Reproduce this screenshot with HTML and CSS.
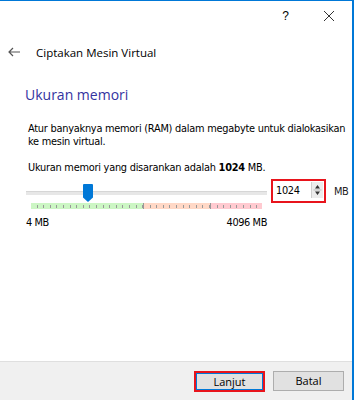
FILE: index.html
```html
<!DOCTYPE html>
<html>
<head>
<meta charset="utf-8">
<link rel="stylesheet" href="styles.css">
</head>
<body>
<div class="window">
  <div class="titlebar">
    <span class="help">?</span>
    <svg class="close" width="12" height="12" viewBox="0 0 12 12"><path d="M1 1 L11 11 M11 1 L1 11" stroke="#333" stroke-width="1" fill="none"/></svg>
  </div>
  <div class="header">
    <svg class="back" width="12" height="10" viewBox="0 0 12 10"><path d="M1 5 H12 M5 1 L1 5 L5 9" stroke="#555" stroke-width="1.2" fill="none"/></svg>
    <span class="title">Ciptakan Mesin Virtual</span>
  </div>
  <div class="main">
    <h1 class="heading">Ukuran memori</h1>
    <p class="desc">Atur banyaknya memori (RAM) dalam megabyte untuk dialokasikan ke mesin virtual.</p>
    <p class="rec">Ukuran memori yang disarankan adalah <b>1024</b> MB.</p>
    <div class="memrow">
      <div class="slider">
        <div class="track"><div class="thumb"></div></div>
        <div class="ticks">
          <div class="zone green"></div><div class="zone orange"></div><div class="zone red"></div>
        </div>
        <div class="limits"><span>4 MB</span><span>4096 MB</span></div>
      </div>
      <div class="spin">
        <div class="spinbox">
          <span class="val">1024</span>
          <div class="arrows">
            <svg width="9" height="16" viewBox="0 0 9 16"><path d="M4.5 3 L7 6.5 H2 Z M4.5 13 L7 9.5 H2 Z" fill="#333"/><path d="M0.5 8 H8.5" stroke="#bbb"/></svg>
          </div>
        </div>
      </div>
      <span class="unit">MB</span>
    </div>
  </div>
  <div class="footer">
    <div class="btnwrap"><button class="btn primary">Lanjut</button></div>
    <button class="btn">Batal</button>
  </div>
</div>
</body>
</html>
```
FILE: styles.css
```css
html, body {
  margin: 0;
  padding: 0;
  background: #fff;
}
.window {
  width: 352px;
  height: 399px;
  border-top: 1px solid #0078d7;
  border-right: 2px solid #0078d7;
  display: flex;
  flex-direction: column;
  font-family: "Open Sans", "Noto Sans", sans-serif;
  color: #000;
}
.titlebar {
  height: 29px;
  display: flex;
  align-items: center;
  justify-content: flex-end;
  gap: 34px;
  padding-right: 17px;
}
.help {
  font-family: "Liberation Sans", sans-serif;
  font-size: 12px;
  color: #000;
}
.close { display: block; }
.header {
  height: 44px;
  display: flex;
  align-items: center;
  padding-left: 8px;
  gap: 16px;
}
.title {
  font-size: 11.5px;
  color: #000;
}
.main {
  flex: 1;
  padding-left: 26px;
}
.heading {
  margin: 12px 0 0 -1px;
  font-family: "Open Sans", sans-serif;
  font-weight: 400;
  font-size: 14px;
  color: #33339f;
  line-height: 18px;
}
.desc, .rec {
  font-family: "DejaVu Sans", sans-serif;
  font-size: 9.8px;
  line-height: 13px;
  margin: 0;
  padding-left: 2px;
  width: 330px;
  letter-spacing: -0.25px;
}
.desc { margin-top: 18px; }
.rec { margin-top: 13px; }
.memrow {
  display: flex;
  margin-top: 12px;
}
.slider {
  width: 241px;
}
.track {
  position: relative;
  height: 3px;
  background: #e7e7e7;
  border-top: 1px solid #d6d6d6;
  margin-top: 5px;
}
.thumb {
  position: absolute;
  left: 57px;
  top: -8px;
  width: 10px;
  height: 18px;
  background: #0078d7;
  clip-path: polygon(0 0, 100% 0, 100% 75%, 50% 100%, 0 75%);
  border-radius: 1px;
}
.ticks {
  display: flex;
  margin: 8px 0 0 5px;
  width: 231px;
  height: 6px;
}
.zone {
  height: 6px;
  background-image: repeating-linear-gradient(90deg, transparent 0, transparent 5.6px, #999 5.6px, #999 6.6px);
  background-size: 100% 3px;
  background-repeat: no-repeat;
  background-position: 0 2px;
}
.zone.green { width: 112px; background-color: #ccf6c4; }
.zone.orange { width: 67px; background-color: #ffd8c6; border-left: 1px solid #999; }
.zone.red { width: 51px; background-color: #ffcad0; border-left: 1px solid #999; }
.limits {
  display: flex;
  justify-content: space-between;
  margin-top: 8px;
  font-family: "DejaVu Sans", sans-serif;
  font-size: 9.8px;
  letter-spacing: -0.4px;
}
.spin {
  margin-left: 4px;
  margin-top: -7px;
  border: 2px solid #e8141c;
  width: 49px;
  height: 18px;
  padding: 1px;
}
.spinbox {
  height: 16px;
  display: flex;
  align-items: center;
  justify-content: space-between;
  background: #fff;
}
.val {
  font-family: "DejaVu Sans", sans-serif;
  font-size: 9.8px;
  letter-spacing: -0.3px;
  padding-left: 2px;
}
.arrows {
  width: 11px;
  height: 16px;
  background: #ececec;
  border-left: 1px solid #cfcfcf;
  display: flex;
  justify-content: center;
}
.arrows svg { display: block; }
.unit {
  margin-left: 8px;
  font-family: "DejaVu Sans", sans-serif;
  font-size: 9.8px;
  letter-spacing: -0.4px;
  color: #222;
}
.footer {
  height: 38px;
  background: #f0f0f0;
  border-top: 1px solid #dfdfdf;
  display: flex;
  align-items: center;
  justify-content: flex-end;
  padding-right: 8px;
  gap: 8px;
}
.btnwrap {
  border: 2px solid #e8141c;
  display: flex;
}
.btn {
  width: 71px;
  height: 20px;
  margin: 0;
  background: #e1e1e1;
  border: 1px solid #adadad;
  font-family: "Open Sans", sans-serif;
  font-size: 11px;
  color: #000;
  padding: 0;
  line-height: 16px;
}
.btn.primary {
  width: 67px;
  height: 17px;
  border: 1px solid #0078d7;
}
```
